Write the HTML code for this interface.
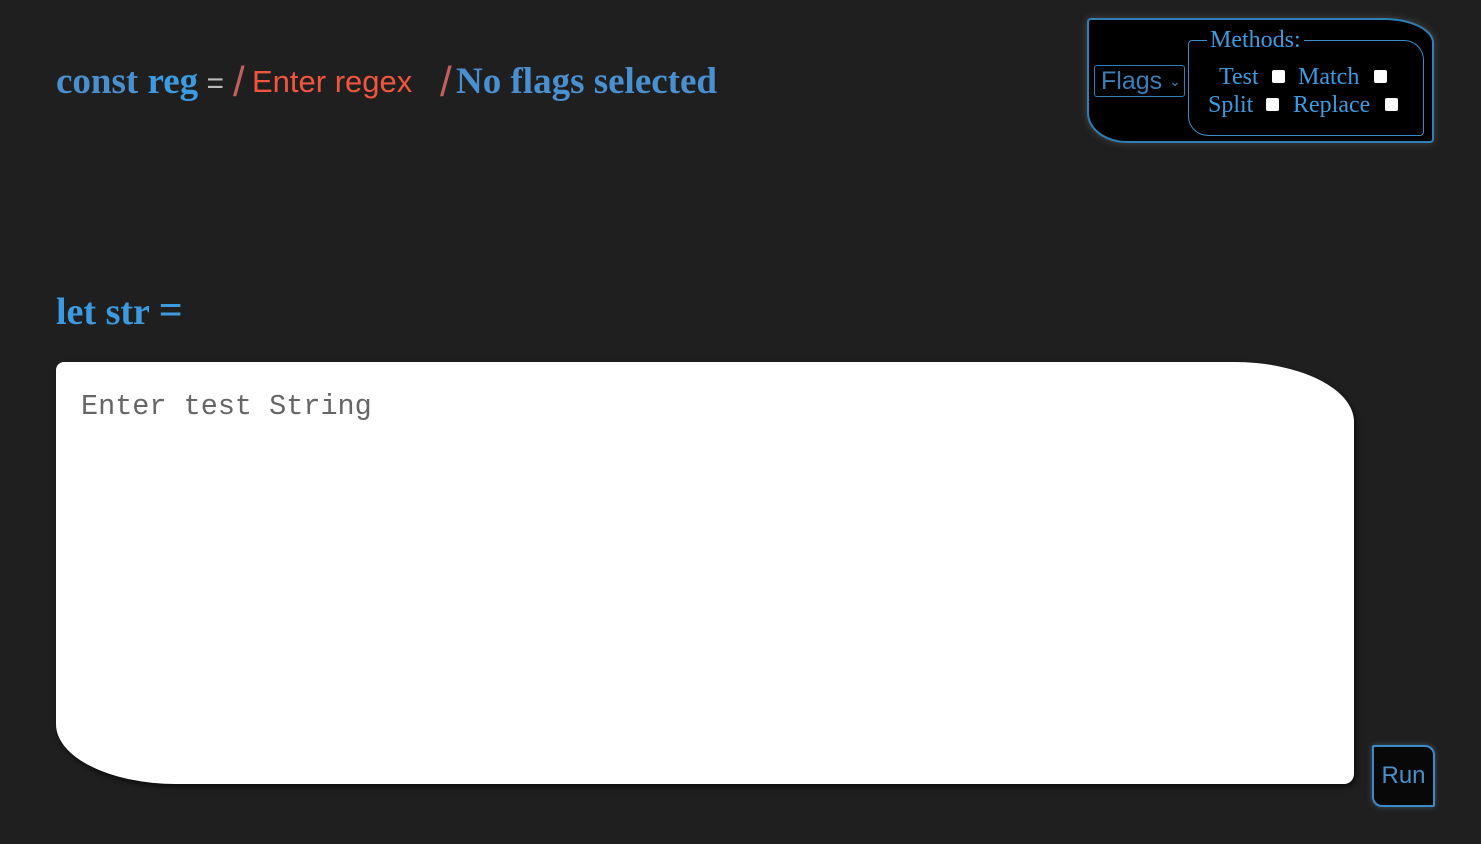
<!DOCTYPE html>
<html><head><style>
body{margin:0;background:#1f1f1f;width:1481px;height:844px;overflow:hidden;position:relative;font-family:"Liberation Serif",serif;}
.t{position:absolute;white-space:nowrap}
#panel{position:absolute;left:1087px;top:18px;width:343px;height:121px;background:#000;border:2px solid #2f7fb8;border-radius:4px 50px 4px 40px/4px 25px 4px 30px;box-shadow:0 0 8px rgba(150,150,150,.35)}
#fs{position:absolute;left:1188px;top:40px;width:234px;height:94px;border:1px solid #3a8cc8;border-radius:4px 20px 4px 20px}
.cb{position:absolute;width:13px;height:13px;background:#fff;border-radius:2px}
#ta{position:absolute;left:56px;top:362px;width:1298px;height:422px;background:#fff;border-radius:8px 120px 10px 120px/8px 60px 10px 60px;box-shadow:2px 3px 6px rgba(0,0,0,.6)}
#run{position:absolute;left:1372px;top:745px;width:59px;height:58px;background:#080808;border:2px solid #3a8cc8;border-radius:2px 10px 2px 10px;box-shadow:0 0 6px rgba(120,160,200,.4);color:#4a90c8;font:24px "Liberation Sans",sans-serif;text-align:center;line-height:58px}
</style></head><body>
<div class="t" style="left:56px;top:60px;font-size:37px;font-weight:bold;color:#4a8fd0">const <span style="color:#3c9be0">reg</span><span style="font-weight:normal;color:#bbb;font-size:30px;font-family:'Liberation Sans',sans-serif"> = </span></div>
<div class="t" style="left:233px;top:58px;font:42px 'Liberation Sans',sans-serif;color:#c06060;">/</div>
<div class="t" style="left:252px;top:64px;font:31px 'Liberation Sans',sans-serif;color:#f0553f;">Enter regex</div>
<div class="t" style="left:440px;top:58px;font:42px 'Liberation Sans',sans-serif;color:#c06060;">/</div>
<div class="t" style="left:456px;top:60px;font-size:37px;font-weight:bold;color:#4a8fd0">No flags selected</div>
<div class="t" style="left:56px;top:290px;font-size:38px;font-weight:bold;color:#3c9be0">let str <span style="font-size:42px;line-height:38px">=</span></div>
<div id="panel"></div>
<div class="t" style="left:1094px;top:65px;width:89px;height:30px;border:1px solid #2f7fb8;border-radius:3px;"></div>
<div class="t" style="left:1101px;top:67px;font:25px 'Liberation Sans',sans-serif;color:#3a7fb8">Flags <span style="font-size:14px;vertical-align:3px">⌄</span></div>
<div id="fs"></div>
<div class="t" style="left:1207px;top:27px;background:#000;padding:0 3px;font-size:24px;color:#3c9be0">Methods:</div>
<div class="t" style="left:1219px;top:64px;font-size:24px;color:#3c9be0">Test</div><div class="cb" style="left:1272px;top:70px"></div>
<div class="t" style="left:1298px;top:64px;font-size:24px;color:#3c9be0">Match</div><div class="cb" style="left:1374px;top:70px"></div>
<div class="t" style="left:1208px;top:92px;font-size:24px;color:#3c9be0">Split</div><div class="cb" style="left:1266px;top:98px"></div>
<div class="t" style="left:1293px;top:92px;font-size:24px;color:#3c9be0">Replace</div><div class="cb" style="left:1385px;top:98px"></div>
<div id="ta"></div>
<div class="t" style="left:81px;top:390px;font:28.5px 'Liberation Mono',monospace;color:#666">Enter test String</div>
<div id="run">Run</div>
</body></html>
